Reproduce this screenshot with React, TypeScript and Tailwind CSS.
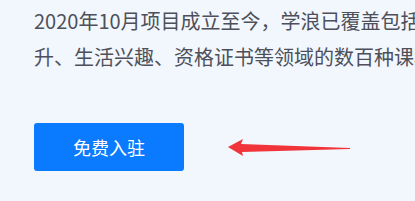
const Arrow = () => (
  <svg width="124" height="20" viewBox="0 0 124 20" className="ml-[44px] mt-[1px]">
    <path d="M0 9 L15 1 L13 6 L122 10 L122 11 L14 14 L15 18 Z" fill="#f0343a" />
  </svg>
);

const App = () => {
  return (
    <div
      className="w-[415px] h-[201px] overflow-hidden bg-[#f2f6fd] pl-[34px] pt-[3px]"
      style={{ fontFamily: '"Noto Sans CJK SC", "Noto Sans", sans-serif' }}
    >
      <p className="w-[420px] whitespace-nowrap text-[20px] leading-[36px] text-[#4d505a]">
        2020年10月项目成立至今，学浪已覆盖包括
        <br />
        升、生活兴趣、资格证书等领域的数百种课程
      </p>
      <div className="mt-[48px] flex items-center">
        <button className="w-[150px] h-[48px] rounded-[3px] bg-[#0a7aff] text-white text-[18px]">
          免费入驻
        </button>
        <Arrow />
      </div>
    </div>
  );
};

export default App;
